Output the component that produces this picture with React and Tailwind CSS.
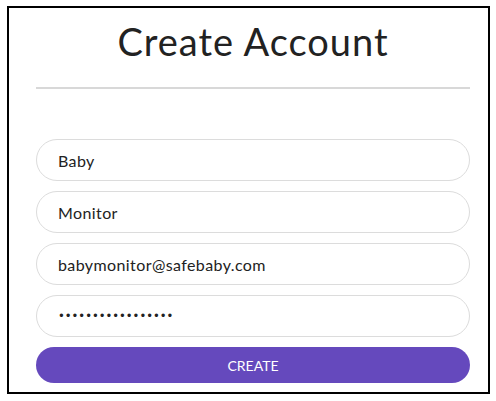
import { useState } from 'react'

export default function App(){
  const [first, setFirst] = useState('Baby')
  const [last, setLast] = useState('Monitor')
  const [email, setEmail] = useState('babymonitor@safebaby.com')
  const [pass, setPass] = useState('babymonitor123456')

  const field = "h-[42px] w-full rounded-full border border-[#dcdcdc] bg-white pl-[21px] pr-4 text-[16px] tracking-[0.4px] text-[#222] outline-none"

  return (
    <div className="w-[496px] h-[401px] bg-white pt-[6px] pl-[7px]" style={{ fontFamily: 'Lato, "Noto Sans", sans-serif' }}>
      <div className="w-[483px] h-[388px] border-2 border-black pl-[27px] pr-[18px]">
        <h1 className="text-center text-[38px] leading-none tracking-[1px] pt-[14px] text-[#222]">Create Account</h1>
        <hr className="mt-[27px] border-t-2 border-[#d8d8d8]" />
        <form onSubmit={e=>e.preventDefault()} className="mt-[50px] flex flex-col gap-[10px]">
          <input className={field} value={first} onChange={e=>setFirst(e.target.value)} />
          <input className={field} value={last} onChange={e=>setLast(e.target.value)} />
          <input className={field} value={email} onChange={e=>setEmail(e.target.value)} />
          <input type="password" className={field + " !text-[11.5px] !tracking-[0px]"} style={{ fontFamily: '"DejaVu Sans", sans-serif' }} value={pass} onChange={e=>setPass(e.target.value)} />
          <button className="h-[36px] w-full rounded-full bg-[#6549bd] text-[14px] text-white">CREATE</button>
        </form>
      </div>
    </div>
  )
}
